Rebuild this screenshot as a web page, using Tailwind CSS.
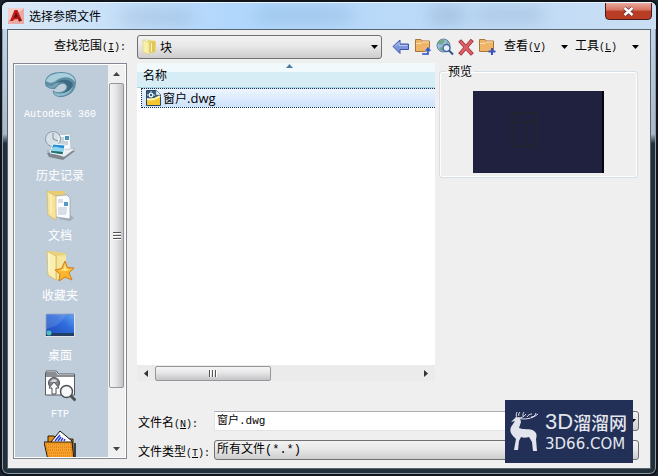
<!DOCTYPE html>
<html lang="zh-CN">
<head>
    <meta charset="UTF-8">
    <meta name="viewport" content="width=device-width, initial-scale=1.0">
    <title>选择参照文件</title>
    <script src="https://cdn.jsdelivr.net/npm/@tailwindcss/browser@4"></script>
</head>
<body class="bg-[#1c2630] font-['Noto_Sans_CJK_SC',sans-serif] text-[12px] leading-4 text-black">
    <div class="relative flex h-screen min-h-[400px] flex-col rounded-lg border-2 border-[#10151c] bg-linear-to-b from-[#c3dcf5] from-0% via-[#a9b8c8] via-28% to-[#22303c] to-30% px-[5px] pb-[5px] shadow-[inset_0_0_0_1px_#8d9aa5]">
        <!-- Title bar -->
        <header class="relative -mx-[5px] flex h-[27px] shrink-0 items-center overflow-hidden rounded-t-md border-t border-[#e8f4ff] bg-linear-to-r from-[#dce9f5] from-0% via-[#b1d7fd] via-35% to-[#c9def3] pl-[6px]">
            <div class="absolute top-[8px] left-[120px] h-[12px] w-[70px] bg-[#7f9dbd]/40 blur-sm"></div>
            <div class="absolute top-[6px] left-[255px] h-[12px] w-[95px] bg-[#6f9fca]/40 blur-sm"></div>
            <div class="absolute top-[3px] left-[428px] h-[18px] w-[34px] bg-[#7f9dbd]/40 blur-sm"></div>
            <div class="absolute top-[6px] left-[475px] h-[12px] w-[65px] bg-[#7f9dbd]/40 blur-sm"></div>
            <svg class="relative h-4 w-4" viewBox="0 0 16 16">
                <rect width="16" height="16" fill="#e9a9a5"/>
                <path d="M0 0h16L0 13z" fill="#f4d0cc"/>
                <path d="M2 13L6.500 2h3L14 12.500l-3 1L9.800 11 6 11.500 5 13z" fill="#c51b17"/>
                <path d="M8 4l2 5-4 1z" fill="#631011"/>
                <path d="M10 9l4 3.500-3 1z" fill="#7d1213"/>
            </svg>
            <h1 class="relative ml-[5px]">选择参照文件</h1>
            <button type="button" aria-label="关闭" class="absolute -top-px right-[4px] flex h-[18px] w-[47px] items-center justify-center rounded-b border border-[#4b1a1a] bg-linear-to-b from-[#e9a99c] from-0% via-[#d5705f] via-45% to-[#b93c25] to-50%">
                <svg class="h-[11px] w-[13px]" viewBox="0 0 13 11">
                    <path d="M2.500 2l8 7M10.500 2l-8 7" stroke="#5c3a3a" stroke-width="4"/>
                    <path d="M2.500 2l8 7M10.500 2l-8 7" stroke="#fff" stroke-width="2.400"/>
                </svg>
            </button>
        </header>

        <!-- Dialog body -->
        <main class="flex min-h-0 flex-1 flex-col border border-[#56646f] bg-[#efefef] pr-[11px] pb-[8px] pl-[5px]">
            <!-- Toolbar -->
            <div class="flex h-[33px] shrink-0 items-center">
                <label for="lookIn" class="w-[124px] pr-[11px] text-right whitespace-nowrap">查找范围<span class="font-['Liberation_Mono',monospace] text-[10px]">(<u>I</u>):</span></label>
                <div class="relative h-6 w-[245px] shrink-0">
                    <select id="lookIn" class="h-full w-full appearance-none rounded-[3px] border border-[#707070] bg-linear-to-b from-[#f2f2f2] from-0% via-[#e8e8e8] via-45% to-[#cdcdcd] pl-[22px]">
                        <option>块</option>
                    </select>
                    <svg class="pointer-events-none absolute top-[4px] left-[5px] h-4 w-4" viewBox="0 0 16 16">
                        <path d="M1 1l5-.500v12L9 14l5-1V2L8 1z" fill="#ead978"/>
                        <path d="M8 3l5-1v11l-5 1z" fill="#dfc65a"/>
                        <path d="M1 1l6 2v12.500L1 13z" fill="#f8efa9" stroke="#d9c468" stroke-width=".5"/>
                        <path d="M9.500 4v9" stroke="#fff3b4"/>
                    </svg>
                    <svg class="pointer-events-none absolute top-[10px] right-[4px] h-[4px] w-[7px]" viewBox="0 0 7 4"><path d="M0 0h7L3.500 4z"/></svg>
                </div>
                <div class="ml-[10px] flex shrink-0 items-center gap-[4px]">
                    <button type="button" aria-label="后退">
                        <svg class="h-[18px] w-[18px]" viewBox="0 0 18 18">
                            <path d="M1 8.500L8 2v4h8.500v5.500H8v4z" fill="#7d95dc" stroke="#3d55a8"/>
                            <path d="M3 8.500l4-4V7.500h8.500" fill="none" stroke="#b9c9f4"/>
                        </svg>
                    </button>
                    <button type="button" aria-label="上一级">
                        <svg class="h-[18px] w-[18px]" viewBox="0 0 18 18">
                            <path d="M1.500 13.500v-12H7L8.500 3h7v10.500z" fill="#f0b468" stroke="#a8743a"/>
                            <path d="M2 5.500h5L8.500 4H15" fill="none" stroke="#fbe0b0"/>
                            <path d="M8 17h7v-4h2.500L14 8.500 10.500 13H13v2H8z" fill="#3454c4" stroke="#e8ecfa" stroke-width=".4"/>
                        </svg>
                    </button>
                    <button type="button" aria-label="搜索 Web">
                        <svg class="h-[18px] w-[18px]" viewBox="0 0 18 18">
                            <circle cx="7.500" cy="7.500" r="6.500" fill="#9dbde0" stroke="#66809f"/>
                            <path d="M3 3l4-2 2 2-3 4-4-1zM8 11l-3 2-2-3 2-1zM10 2l3 3-2 1z" fill="#71ab8c"/>
                            <circle cx="10.500" cy="10" r="3.500" fill="#e6f1fc" stroke="#46689e" stroke-width="1.500"/>
                            <path d="M13 12.500l4 4" stroke="#34548c" stroke-width="2"/>
                        </svg>
                    </button>
                    <button type="button" aria-label="删除">
                        <svg class="h-[18px] w-[16px]" viewBox="0 0 16 18">
                            <path d="M3 4l10 11M13 3.500L3 15" stroke="#a32c37" stroke-width="4" stroke-linecap="square"/>
                            <path d="M3 4l10 11M13 3.500L3 15" stroke="#dc6068" stroke-width="2.400" stroke-linecap="square"/>
                        </svg>
                    </button>
                    <button type="button" aria-label="新建文件夹">
                        <svg class="h-[18px] w-[18px]" viewBox="0 0 18 18">
                            <path d="M1.500 13.500v-12H7L8.500 3h7v10.500z" fill="#f0b468" stroke="#a8743a"/>
                            <path d="M2 5.500h5L8.500 4H15" fill="none" stroke="#fbe0b0"/>
                            <path d="M14 10v7M10.500 13.500h7" stroke="#3454c4" stroke-width="2"/>
                        </svg>
                    </button>
                </div>
                <div class="ml-[8px] flex flex-1 items-center justify-between whitespace-nowrap">
                    <button type="button">查看<span class="font-['Liberation_Mono',monospace] text-[10px]">(<u>V</u>)</span></button>
                    <svg class="ml-[8px] h-[4px] w-[7px]" viewBox="0 0 7 4"><path d="M0 0h7L3.500 4z"/></svg>
                    <button type="button">工具<span class="font-['Liberation_Mono',monospace] text-[10px]">(<u>L</u>)</span></button>
                    <svg class="ml-[8px] h-[4px] w-[7px]" viewBox="0 0 7 4"><path d="M0 0h7L3.500 4z"/></svg>
                </div>
            </div>

            <div class="flex min-h-0 flex-1 gap-[10px]">
                <!-- Places -->
                <aside class="mb-px flex w-[114px] shrink-0 border border-[#828790] bg-white p-px">
                    <nav class="flex-1 overflow-hidden bg-[#bfcddb] pr-[3px] text-center text-white">
                        <a href="#" class="block h-[60px] pt-[5px]">
                            <svg class="mx-auto h-8 w-8" viewBox="0 0 32 32">
                                <path d="M1 13C1 5 9 2 17 2c9 0 15 4 15 10 0 7-4 13-13 15-7 1-11-3-10-7 2 3 8 3 12 0 2-2 2-5-1-6-4-1-6 2-9 5-6 0-10-2-10-6z" fill="#5d8ca3"/>
                                <path d="M2 11c2-6 9-8 16-8 8 0 13 4 13 9-4-6-12-6-18-2-4 3-7 4-11 1z" fill="#a9cedc"/>
                                <path d="M12 13c5-5 14-4 17 1-1 5-5 9-11 9 5-2 7-6 4-9-2-2-6-2-10-1z" fill="#3c6a83"/>
                                <path d="M10 22c5 3 13 2 19-5-2 6-8 9-14 9-3 0-5-2-5-4z" fill="#8fbccd"/>
                                <path d="M3 14c2 3 5 3 8 0l4-2c-2 3-3 5-6 6-3 0-5-1-6-4z" fill="#7aa7ba"/>
                            </svg>
                            <span class="mt-[5px] block font-['Liberation_Mono',monospace] text-[10px] leading-4">Autodesk 360</span>
                        </a>
                        <a href="#" class="block h-[60px] pt-[5px]">
                            <svg class="mx-auto h-8 w-8" viewBox="0 0 32 32">
                                <path d="M3 23l16-5 12 3-12 9-14-3z" fill="#7f858c"/>
                                <path d="M3 21l16-5 12 3-11 8z" fill="#edf0f2" stroke="#9aa0a6" stroke-width=".6"/>
                                <path d="M13 5l13-1 1 15-13 1z" fill="#f6f9fb" stroke="#a9b3bd" stroke-width=".6"/>
                                <path d="M16 8h4M16 10h4M16 12h8M16 14h8" stroke="#9aabbd"/>
                                <path d="M21 6h4v4h-4z" fill="#4595ba"/>
                                <circle cx="9" cy="9" r="7.500" fill="#dce6eb" fill-opacity=".75" stroke="#8f9ea9"/>
                                <path d="M9 3v6l5 2" fill="none" stroke="#81909b"/>
                                <path d="M9 14l12 1-2 10-13-2z" fill="#238fd0" stroke="#f5f8fa"/>
                                <path d="M8 18c4-3 8 1 12 0l-1 4-12-1z" fill="#8ed7ee"/>
                                <path d="M7 21l12 1-1 2-11-2z" fill="#2b6b55"/>
                            </svg>
                            <span class="mt-[5px] block">历史记录</span>
                        </a>
                        <a href="#" class="block h-[60px] pt-[5px]">
                            <svg class="mx-auto h-8 w-8" viewBox="0 0 32 32">
                                <path d="M14 29l12 2 4-3-4-3z" fill="#8c99a5" fill-opacity=".6"/>
                                <path d="M4 1h17v20L8 27z" fill="#e9cc6f"/>
                                <path d="M11 6l12-1 3 3v21l-14-2z" fill="#fafcff" stroke="#949eaa" stroke-width=".7"/>
                                <path d="M14 10h5M14 12h5M14 18h9M14 20h9M14 22h9M14 24h8" stroke="#b6c1d0"/>
                                <path d="M20 12h4v4h-4z" fill="#5598c4"/>
                                <path d="M3 1l9 5v24l-8-5z" fill="#f7e49c" stroke="#d2b658" stroke-width=".7"/>
                                <path d="M5 5l2 1v17" fill="none" stroke="#fff8cb"/>
                            </svg>
                            <span class="mt-[5px] block">文档</span>
                        </a>
                        <a href="#" class="block h-[60px] pt-[5px]">
                            <svg class="mx-auto h-8 w-8" viewBox="0 0 32 32">
                                <path d="M4 1l18 2v25l-10 2z" fill="#e9d27d"/>
                                <path d="M13 6l9-1v22l-9 2z" fill="#f5e7a0"/>
                                <path d="M3 1l9 5v24l-8-5z" fill="#faefb0" stroke="#d2b658" stroke-width=".7"/>
                                <path d="M5 4v18" stroke="#fffbdc"/>
                                <path d="M21 11l2.500 6.500 6.500.500-5 5 3 7-7-3-6 4 1-7-5-4 6.500-1.500z" fill="#fbb52f" stroke="#d27e1b"/>
                                <path d="M21 14l1.500 5 4 .500-5 1.500-6-.500 4-1.500z" fill="#ffe680"/>
                            </svg>
                            <span class="mt-[5px] block">收藏夹</span>
                        </a>
                        <a href="#" class="block h-[60px] pt-[5px]">
                            <svg class="mx-auto h-8 w-8" viewBox="0 0 32 32">
                                <defs>
                                    <linearGradient id="screen" x1="0" y1="1" x2="1" y2="0">
                                        <stop offset="0" stop-color="#1c49b8"/>
                                        <stop offset=".6" stop-color="#2f6cdc"/>
                                        <stop offset="1" stop-color="#6aa6f0"/>
                                    </linearGradient>
                                </defs>
                                <rect x="1.500" y="3.500" width="29" height="23" fill="url(#screen)" stroke="#dfe5eb"/>
                                <path d="M2 26V4h28" fill="none" stroke="#7891b5"/>
                                <path d="M2 4h20C17 15 9 17 2 19z" fill="#fff" fill-opacity=".13"/>
                                <path d="M2 23h28v3H2z" fill="#233d63"/>
                                <circle cx="5" cy="23" r="2.500" fill="#4bbbc4"/>
                            </svg>
                            <span class="mt-[5px] block">桌面</span>
                        </a>
                        <a href="#" class="block h-[60px] pt-[5px]">
                            <svg class="mx-auto h-8 w-8" viewBox="0 0 32 32">
                                <path d="M1.500 25V3l1-2h10l2 3h16v21z" fill="#fff" stroke="#555b60"/>
                                <path d="M2 4V2h10l2 3h16v2H2z" fill="#8a8e92"/>
                                <circle cx="10" cy="13" r="5.500" fill="#808488" stroke="#4e5256"/>
                                <path d="M6 12l3-3 4 1-1 2z" fill="#d5d8da"/>
                                <path d="M10 12l5 6h-3v6H8v-6H5z" fill="#fff" stroke="#4e5256"/>
                                <circle cx="22.500" cy="21.500" r="6" fill="#f5f7f9" stroke="#4e5256" stroke-width="1.500"/>
                                <path d="M26.500 25.500l5 5" stroke="#4e5256" stroke-width="3"/>
                            </svg>
                            <span class="mt-[5px] block font-['Liberation_Mono',monospace] text-[10px] leading-4">FTP</span>
                        </a>
                        <a href="#" class="block h-[60px] pt-[5px]" aria-label="Buzzsaw">
                            <svg class="mx-auto h-8 w-8" viewBox="0 0 32 32">
                                <path d="M4 14V6h6l2 3h17v20H5z" fill="#e98d19" stroke="#2a1c08"/>
                                <path d="M7 12l9-11 12 10v3H7z" fill="#fff" stroke="#111"/>
                                <path d="M11 11l5-6M14 11l3-4M17 11l2-3M20 11l1-2" stroke="#2c3fd0" stroke-width="1.500"/>
                                <path d="M0 12h28l2 18H4z" fill="#f5a32c" stroke="#2a1c08"/>
                                <path d="M2 14h25l2 16H5z" fill="none" stroke="#dc7010" stroke-dasharray="1 1"/>
                                <path d="M4 17h23M4 20h24M5 23h23M5 26h24" stroke="#d96f12" stroke-dasharray="1 1"/>
                                <path d="M31 13v17" stroke="#111" stroke-width="1.500"/>
                            </svg>
                        </a>
                    </nav>
                    <!-- Places scrollbar -->
                    <div class="flex w-[17px] flex-col items-center bg-[#f0f0f0]">
                        <svg class="my-[7px] h-[4px] w-[7px] shrink-0" viewBox="0 0 7 4"><path d="M0 4h7L3.500 0z" fill="#444"/></svg>
                        <div class="flex w-[15px] flex-1 flex-col items-center justify-center gap-px rounded-xs border border-[#979797] bg-linear-to-r from-[#f5f5f5] from-0% via-[#e6e6e8] via-45% to-[#c4c4c8]">
                            <i class="h-[2px] w-[8px] border-b border-white bg-[#555]"></i>
                            <i class="h-[2px] w-[8px] border-b border-white bg-[#555]"></i>
                            <i class="h-[2px] w-[8px] border-b border-white bg-[#555]"></i>
                        </div>
                        <svg class="mt-[59px] mb-[6px] h-[4px] w-[7px] shrink-0" viewBox="0 0 7 4"><path d="M0 0h7L3.500 4z" fill="#444"/></svg>
                    </div>
                </aside>

                <section class="flex min-w-0 flex-1 flex-col">
                    <div class="flex min-h-0 flex-1 gap-[4px]">
                        <!-- File list -->
                        <div class="flex w-[298px] shrink-0 flex-col">
                            <div class="flex-1 overflow-hidden bg-white">
                                <table class="w-full">
                                    <thead>
                                        <tr>
                                            <th class="relative h-[24px] border-b border-[#a9d3e2] bg-linear-to-b from-[#f1f9fc] from-35% to-[#d6edf5] to-40% pl-[6px] text-left font-normal">
                                                名称
                                                <svg class="absolute top-px left-[149px] h-[4px] w-[7px]" viewBox="0 0 7 4"><path d="M0 4h7L3.500 0z" fill="#4d7ea1"/></svg>
                                            </th>
                                        </tr>
                                    </thead>
                                    <tbody>
                                        <tr>
                                            <td class="pl-[4px]">
                                                <div class="flex h-5 items-center gap-px border border-r-0 border-dotted border-[#18304d] bg-linear-to-b from-[#edf4fe] to-[#cde2fc] pl-[4px]">
                                                    <svg class="h-4 w-4" viewBox="0 0 16 16">
                                                        <path d="M.500.500h10l4 4v11H.500z" fill="#365b7c" stroke="#294766"/>
                                                        <path d="M1 9c4 0 9-1 13-3v9H1z" fill="#f6c72d"/>
                                                        <path d="M1 9c4 1 9 0 13-3" fill="none" stroke="#fff6ad" stroke-width="2"/>
                                                        <path d="M10 0v5h5z" fill="#eef6fc" stroke="#65819c" stroke-width=".6"/>
                                                        <path d="M5 1v7M1 5h8" stroke="#e7f3fc"/>
                                                        <rect x="3.500" y="3.500" width="3" height="3" fill="#365b7c" stroke="#e7f3fc"/>
                                                    </svg>
                                                    <span>窗户<span class="font-['Open_Sans',sans-serif] text-[13px]">.dwg</span></span>
                                                </div>
                                            </td>
                                        </tr>
                                    </tbody>
                                </table>
                            </div>
                            <!-- List scrollbar -->
                            <div class="flex h-[16px] items-center bg-[#ebebeb]">
                                <svg class="mx-[7px] h-[7px] w-[4px] shrink-0" viewBox="0 0 4 7"><path d="M4 0v7L0 3.500z" fill="#333"/></svg>
                                <div class="flex h-[15px] w-[116px] items-center justify-center gap-px rounded-xs border border-[#979797] bg-linear-to-b from-[#f5f5f5] from-0% via-[#e6e6e8] via-45% to-[#c4c4c8]">
                                    <i class="h-[7px] w-[2px] border-r border-white bg-[#555]"></i>
                                    <i class="h-[7px] w-[2px] border-r border-white bg-[#555]"></i>
                                    <i class="h-[7px] w-[2px] border-r border-white bg-[#555]"></i>
                                </div>
                                <svg class="mr-[7px] ml-auto h-[7px] w-[4px] shrink-0" viewBox="0 0 4 7"><path d="M0 0v7l4-3.500z" fill="#333"/></svg>
                            </div>
                        </div>

                        <!-- Preview -->
                        <fieldset class="mr-px h-[115px] flex-1 rounded-[3px] border border-[#d5dfe5] shadow-[inset_0_0_0_1px_#fff]">
                            <legend class="ml-[6px] px-[2px]">预览</legend>
                            <svg class="mx-auto mt-[12px] h-[82px] w-[131px]" viewBox="0 0 131 82">
                                <path d="M0 0h131v82H0z" fill="#20213f"/>
                                <path d="M129 0h2v82h-2z" fill="#05050a"/>
                                <path d="M39 22h25v33H39zM39 31h25M52 31v24" fill="none" stroke="#20262f" stroke-width="2"/>
                            </svg>
                        </fieldset>
                    </div>

                    <!-- File name and type -->
                    <div class="mt-[30px] grid grid-cols-[76px_1fr] gap-y-[9px] pl-px">
                        <label for="fileName" class="h-5 pt-[3px] whitespace-nowrap">文件名<span class="font-['Liberation_Mono',monospace] text-[10px]">(<u>N</u>):</span></label>
                        <div class="flex h-5 min-w-0">
                            <input id="fileName" type="text" value="窗户.dwg" class="min-w-0 flex-1 border border-[#e3e3e3] border-t-[#abadb3] bg-white px-[2px] font-['Liberation_Mono','Noto_Sans_CJK_SC',monospace] text-[11px]">
                            <button type="button" aria-label="展开" class="flex w-[17px] items-center justify-end rounded-r-[3px] border border-[#707070] bg-linear-to-b from-[#f2f2f2] to-[#cdcdcd] pr-[2px]">
                                <svg class="h-[4px] w-[7px]" viewBox="0 0 7 4"><path d="M0 0h7L3.500 4z"/></svg>
                            </button>
                        </div>
                        <label for="fileType" class="h-5 pt-[3px] whitespace-nowrap">文件类型<span class="font-['Liberation_Mono',monospace] text-[10px]">(<u>T</u>):</span></label>
                        <select id="fileType" class="h-5 w-full appearance-none rounded-[3px] border border-[#707070] bg-linear-to-b from-[#f2f2f2] from-0% via-[#e8e8e8] via-45% to-[#cdcdcd] pl-[2px] font-['Liberation_Mono','Noto_Sans_CJK_SC',monospace] text-[12px]">
                            <option>所有文件(*.*)</option>
                        </select>
                    </div>
                </section>
            </div>
        </main>

        <!-- Watermark -->
        <div class="absolute right-[23px] bottom-[11px] flex h-[63px] w-[128px] items-center bg-[#222f57] pl-[4px] text-[#e3e5ec]">
            <svg class="h-[42px] w-[32px] shrink-0" viewBox="0 0 32 42">
                <path d="M2 11l5-5 4 1 1 4-2 6c4 2 11 0 15 3 3 2 3 5 2 8l1 12h-4l-1-9-3-5c-3 1-6 1-8 0l-2 4-1 9H5l2-11c-4-4-7-7-5-12l4-6-4 1z" fill="#e3e5ec"/>
                <path d="M8 7c-1-2-1-4 0-6M9 7c3 0 6-1 8-4M10 5c-1-1 0-3 1-4M14 5c0-2 0-3 1-4M9 7c6 2 14 1 20-4M18 6c1-2 3-3 5-3M22 6c3 0 4-1 5-4" fill="none" stroke="#e3e5ec" stroke-width="1"/>
            </svg>
            <div class="ml-[4px] flex flex-col gap-[4px] whitespace-nowrap">
                <p class="flex items-center font-['Liberation_Sans',sans-serif] text-[22px] leading-[20px]">3D<span class="font-['Noto_Sans_CJK_SC',sans-serif] text-[18px] leading-[20px] font-medium">溜溜网</span></p>
                <p class="font-['DejaVu_Sans',sans-serif] text-[15px] leading-4">3D66.COM</p>
            </div>
        </div>
    </div>
</body>
</html>
